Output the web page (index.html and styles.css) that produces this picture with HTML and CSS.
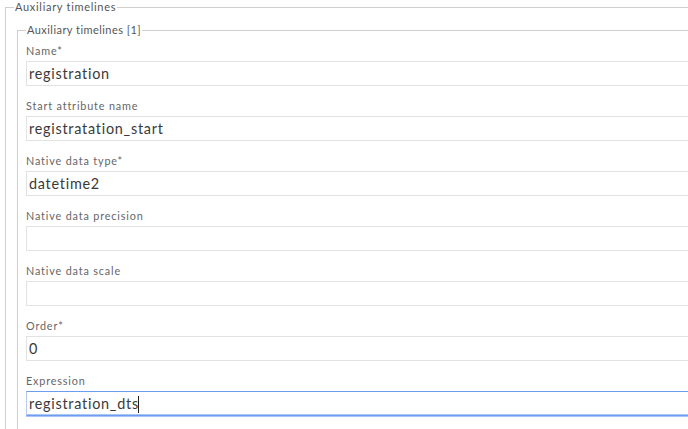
FILE: index.html
```html
<!DOCTYPE html>
<html>
<head>
<meta charset="utf-8">
<link rel="stylesheet" href="styles.css">
</head>
<body>
<fieldset class="outer">
  <legend class="outer-legend">Auxiliary timelines</legend>
  <fieldset class="inner">
    <legend class="inner-legend">Auxiliary timelines [1]</legend>
    <div class="field">
      <div class="label">Name*</div>
      <div class="input">registration</div>
    </div>
    <div class="field">
      <div class="label">Start attribute name</div>
      <div class="input">registratation_start</div>
    </div>
    <div class="field">
      <div class="label">Native data type*</div>
      <div class="input">datetime2</div>
    </div>
    <div class="field">
      <div class="label">Native data precision</div>
      <div class="input"></div>
    </div>
    <div class="field">
      <div class="label">Native data scale</div>
      <div class="input"></div>
    </div>
    <div class="field">
      <div class="label">Order*</div>
      <div class="input">0</div>
    </div>
    <div class="field last">
      <div class="label">Expression</div>
      <div class="input focused">registration_dts<span class="caret"></span></div>
    </div>
  </fieldset>
</fieldset>
</body>
</html>
```

FILE: styles.css
```css
html, body {
  margin: 0;
  padding: 0;
  background: #fff;
  overflow: hidden;
  width: 688px;
  height: 429px;
}
body {
  font-family: Lato, "Liberation Sans", sans-serif;
  color: #444;
}
.outer {
  box-sizing: border-box;
  margin: 1px 0 0 5px;
  width: 683px;
  height: 428px;
  border: 1px solid #cfcfcf;
  border-right: none;
  border-bottom: none;
  padding: 11px 0 0 11px;
  overflow: hidden;
}
.outer-legend {
  font-size: 11px;
  line-height: 12px;
  color: #555;
  padding: 0 1px;
  margin-left: -3px;
  letter-spacing: 0.7px;
}
.inner {
  box-sizing: border-box;
  margin: 0;
  height: 405px;
  border: 1px solid #cfcfcf;
  border-right: none;
  border-bottom: none;
  padding: 8px 0 0 8px;
}
.inner-legend {
  font-size: 11px;
  line-height: 12px;
  color: #555;
  padding: 0 1px;
  margin-left: 0;
  letter-spacing: 0.45px;
}
.field {
  display: flex;
  flex-direction: column;
  margin-bottom: 13px;
}
.field.last {
  margin-bottom: 0;
}
.label {
  font-size: 10.8px;
  line-height: 12px;
  color: #666;
  height: 12px;
  margin-top: 1px;
  margin-bottom: 4px;
  letter-spacing: 0.85px;
}
.input {
  box-sizing: border-box;
  height: 25px;
  border: 1px solid #e2e2e2;
  border-right: none;
  font-size: 14.4px;
  line-height: 23px;
  padding-left: 2px;
  color: #3a3a3a;
  letter-spacing: 0.75px;
}
.input.focused {
  border-color: #6c9df0;
  border-left-color: #b8cbea;
  box-shadow: 0 1px 0 #a9c6f5, 0 -1px 0 #a9c6f5 inset;
}
.caret {
  display: inline-block;
  width: 1px;
  height: 17px;
  background: #222;
  vertical-align: -4px;
  margin-left: -0.75px;
}
```
